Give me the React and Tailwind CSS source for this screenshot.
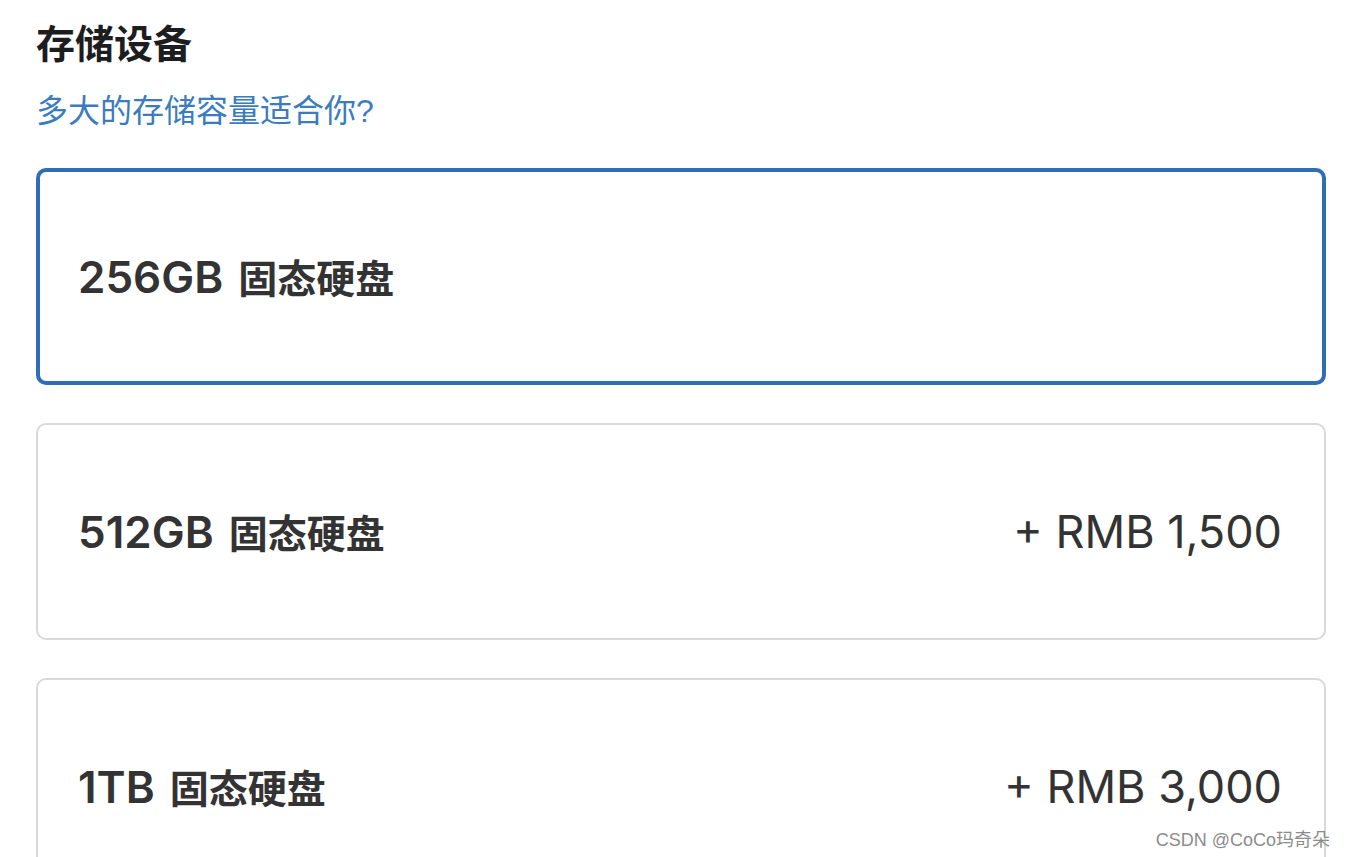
import React from 'react';

const options = [
  { id: '256', size: '256GB', label: '固态硬盘', price: null },
  { id: '512', size: '512GB', label: '固态硬盘', price: '+ RMB 1,500' },
  { id: '1t', size: '1TB', label: '固态硬盘', price: '+ RMB 3,000' },
];

const font = { fontFamily: '"Liberation Sans", "Noto Sans CJK SC", sans-serif' };
const latin = { fontFamily: 'Inter, "Noto Sans CJK SC", sans-serif' };

export default function App() {
  const selected = '256';

  return (
    <div className="relative h-[857px] overflow-hidden bg-white text-[#333333]" style={font}>
      <div className="pl-[36px] pr-[20px] pt-[25px]">
        <h2 className="text-[39px] font-bold leading-none text-[#1d1d1f]">存储设备</h2>
        <p className="mt-[31px] text-[32px] leading-none text-[#3b7bbf]">多大的存储容量适合你?</p>

        <div className="mt-[41px] flex flex-col gap-[38px]">
          {options.map((opt) => {
            const active = opt.id === selected;
            return (
              <button
                key={opt.id}
                className={`flex h-[217px] w-full items-center justify-between rounded-[10px] bg-white pl-[40px] pr-[42px] text-left ${
                  active ? 'border-4 border-[#2f6eb7]' : 'border-2 border-[#d9d9d9]'
                }`}
              >
                <span className={`flex items-baseline gap-[15px] font-semibold ${active ? '-ml-[2px]' : ''}`}>
                  <span className="text-[44px] leading-none" style={latin}>{opt.size}</span>
                  <span className="text-[39px] leading-none">{opt.label}</span>
                </span>
                {opt.price && (
                  <span className="text-[45px] leading-none text-[#333333]" style={latin}>
                    {opt.price}
                  </span>
                )}
              </button>
            );
          })}
        </div>
      </div>

      <div className="absolute bottom-[8px] right-[16px] text-[18px] leading-none text-[#8c8c8c]">
        CSDN @CoCo玛奇朵
      </div>
    </div>
  );
}
